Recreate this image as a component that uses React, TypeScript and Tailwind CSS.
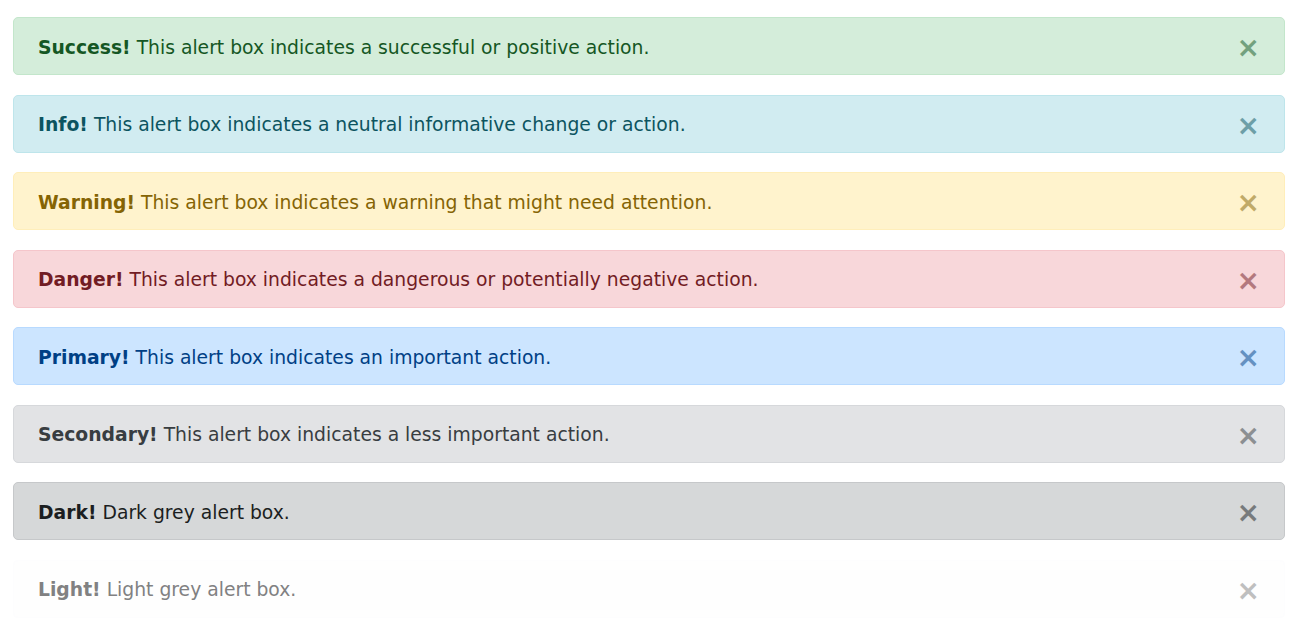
const alerts = [
  { title: 'Success!', text: 'This alert box indicates a successful or positive action.', box: 'bg-[#d4edda] border-[#c3e6cb] text-[#155724]' },
  { title: 'Info!', text: 'This alert box indicates a neutral informative change or action.', box: 'bg-[#d1ecf1] border-[#bee5eb] text-[#0c5460]' },
  { title: 'Warning!', text: 'This alert box indicates a warning that might need attention.', box: 'bg-[#fff3cd] border-[#ffeeba] text-[#856404]' },
  { title: 'Danger!', text: 'This alert box indicates a dangerous or potentially negative action.', box: 'bg-[#f8d7da] border-[#f5c6cb] text-[#721c24]' },
  { title: 'Primary!', text: 'This alert box indicates an important action.', box: 'bg-[#cce5ff] border-[#b8daff] text-[#004085]' },
  { title: 'Secondary!', text: 'This alert box indicates a less important action.', box: 'bg-[#e2e3e5] border-[#d6d8db] text-[#383d41]' },
  { title: 'Dark!', text: 'Dark grey alert box.', box: 'bg-[#d6d8d9] border-[#c6c8ca] text-[#1b1e21]' },
  { title: 'Light!', text: 'Light grey alert box.', box: 'bg-[#fefefe] border-[#fdfdfe] text-[#818182]' },
];

export default function App() {
  return (
    <div className="min-h-screen bg-white pt-[17px] pl-[13px] pr-[12px] font-['DejaVu_Sans',Verdana,sans-serif]">
      <div className="flex flex-col gap-[19.5px]">
        {alerts.map((a) => (
          <div
            key={a.title}
            className={`relative flex items-center h-[58px] rounded-[5px] border pl-[24px] pr-[80px] pt-[3px] text-[18.75px] leading-[28px] ${a.box}`}
          >
            <p>
              <strong className="font-bold">{a.title}</strong> {a.text}
            </p>
            <button
              type="button"
              className="absolute right-[24px] top-[16px] text-[28px] leading-[28px] font-bold opacity-50"
              aria-label="Close"
            >
              ×
            </button>
          </div>
        ))}
      </div>
    </div>
  );
}
